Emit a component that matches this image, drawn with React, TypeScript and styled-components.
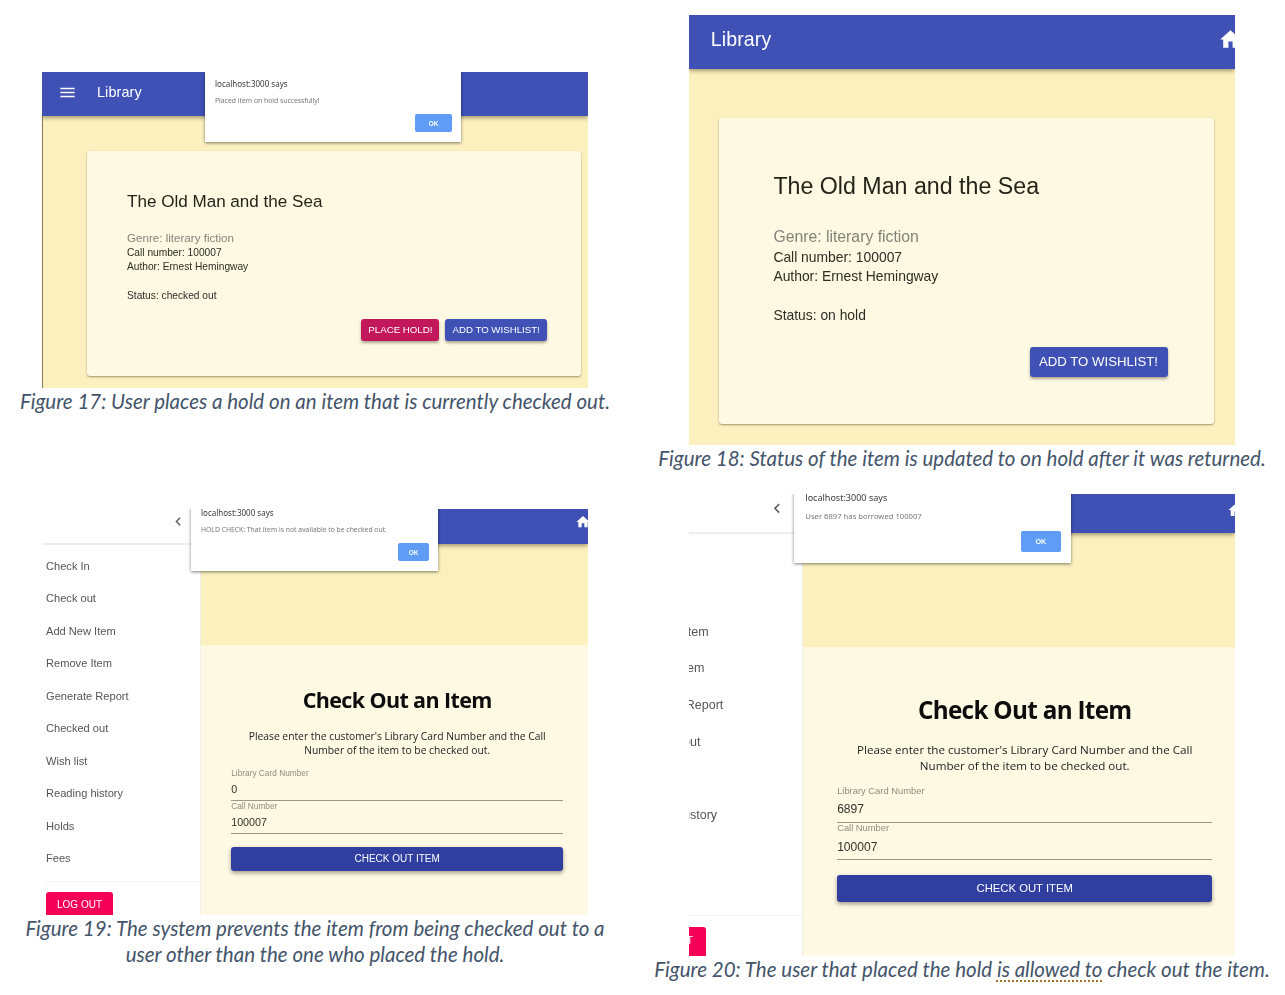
import React from 'react';
import styled, { createGlobalStyle } from 'styled-components';

const GlobalStyle = createGlobalStyle`
  html, body {
    margin: 0;
    background: #ffffff;
    overflow: hidden;
  }
`;

const Page = styled.div`
  display: grid;
  grid-template-columns: 630px 646px;
  grid-template-rows: 480px 515px;
  column-gap: 9px;
  width: 1285px;
  height: 995px;
`;
const Figure = styled.figure<{ $top: number }>`
  display: flex;
  flex-direction: column;
  align-items: center;
  margin: ${(p) => p.$top}px 0 0;
`;
const Caption = styled.figcaption`
  padding-top: 1px;
  font-family: Lato, 'Open Sans', sans-serif;
  font-style: italic;
  font-size: 20.5px;
  line-height: 25.5px;
  color: #44546a;
  text-align: center;
  white-space: nowrap;
`;
const Squiggle = styled.span`
  text-decoration: underline dotted #a5752a 2px;
  text-underline-offset: 3px;
`;
const Shot = styled.div<{ $u: number; $h: number }>`
  --u: ${(p) => p.$u}px;
  position: relative;
  display: flex;
  flex-shrink: 0;
  width: 546px;
  height: ${(p) => p.$h}px;
  overflow: hidden;
  font-family: 'Liberation Sans', Arial, sans-serif;
  background: #fbf0be;
  filter: blur(0.3px);
`;
const Column = styled.div`
  display: flex;
  flex-direction: column;
  flex: 1;
  min-width: 0;
`;
const AppBar = styled.header<{ $height: number; $lift: number }>`
  position: relative;
  z-index: 1;
  display: flex;
  align-items: center;
  flex-shrink: 0;
  box-sizing: border-box;
  height: ${(p) => p.$height}px;
  padding-left: calc(16 * var(--u));
  padding-bottom: ${(p) => p.$lift}px;
  background: #3f51b5;
  box-shadow: 0 2px 4px rgba(60, 50, 20, 0.45);
  color: #ffffff;
`;
const AppTitle = styled.span`
  font-size: calc(14.4 * var(--u));
  letter-spacing: 0.1px;
`;
const MenuGlyph = styled.svg`
  width: 19px;
  height: 19px;
  margin-right: 20px;
  fill: #ffffff;
`;
const HomeGlyph = styled.svg<{ $size: number; $overhang: number }>`
  flex-shrink: 0;
  width: ${(p) => p.$size}px;
  height: ${(p) => p.$size}px;
  margin-left: auto;
  margin-right: -${(p) => p.$overhang}px;
  fill: #ffffff;
`;

const Backdrop = styled.div<{ $edge?: boolean; $left: number; $right: number; $top: number }>`
  flex: 1;
  padding: ${(p) => p.$top}px ${(p) => p.$right}px 0 ${(p) => p.$left}px;
  border-left: ${(p) => (p.$edge ? '1px solid #857a55' : 'none')};
`;
const BookCard = styled.section`
  height: calc(225 * var(--u));
  box-sizing: border-box;
  padding: calc(40.7 * var(--u)) calc(34.2 * var(--u)) 0 calc(40 * var(--u));
  background: #fef9e3;
  border-radius: 3px;
  box-shadow: 0 1px 2px rgba(70, 60, 30, 0.5);
`;
const BookTitle = styled.h2`
  margin: 0 0 calc(19.3 * var(--u));
  font-size: calc(17.07 * var(--u));
  font-weight: 400;
  line-height: calc(20 * var(--u));
  color: #26231a;
`;
const BookLine = styled.div<{ $muted?: boolean; $gap?: number }>`
  margin-top: calc(${(p) => p.$gap ?? 0} * var(--u));
  font-size: calc(${(p) => (p.$muted ? 11.6 : 10.2)} * var(--u));
  line-height: calc(14 * var(--u));
  color: ${(p) => (p.$muted ? '#85827a' : '#2f2c24')};
`;
const CardActions = styled.div`
  display: flex;
  justify-content: flex-end;
  gap: calc(6 * var(--u));
  margin-top: calc(16.5 * var(--u));
`;
const ActionButton = styled.button<{ $pink?: boolean }>`
  height: calc(22 * var(--u));
  padding: 0 calc(7 * var(--u)) calc(1 * var(--u));
  border: 0;
  border-radius: 3px;
  background: ${(p) => (p.$pink ? '#c2185b' : '#3f51b5')};
  box-shadow: 0 2px 3px rgba(50, 40, 20, 0.4);
  color: #ffffff;
  font-family: inherit;
  font-size: calc(9.7 * var(--u));
  white-space: nowrap;
`;

const Sidebar = styled.aside<{ $width: number }>`
  display: flex;
  flex-direction: column;
  flex-shrink: 0;
  box-sizing: border-box;
  width: ${(p) => p.$width}px;
  overflow: hidden;
  background: #ffffff;
  border-right: 1px solid #f0eee8;
`;
const SidebarHead = styled.div`
  display: flex;
  align-items: center;
  justify-content: flex-end;
  flex-shrink: 0;
  box-sizing: border-box;
  height: calc(35.5 * var(--u));
  padding-right: calc(15 * var(--u));
  padding-bottom: calc(9 * var(--u));
  border-bottom: 2px solid #eeeeee;
`;
const ChevronGlyph = styled.svg`
  width: calc(13 * var(--u));
  height: calc(13 * var(--u));
  fill: none;
  stroke: #5c5c5c;
  stroke-width: 2.6;
`;
const NavList = styled.nav<{ $shift: number }>`
  margin-left: ${(p) => p.$shift}px;
  padding-top: calc(5.4 * var(--u));
  padding-bottom: calc(6.3 * var(--u));
  border-bottom: 1px solid #f2f2f2;
`;
const NavItem = styled.div`
  height: calc(32.5 * var(--u));
  font-size: calc(11.1 * var(--u));
  line-height: calc(32.5 * var(--u));
  color: #555555;
  white-space: nowrap;
`;
const LogoutButton = styled.button<{ $shift: number }>`
  flex-shrink: 0;
  width: calc(67 * var(--u));
  height: calc(34 * var(--u));
  margin: calc(10 * var(--u)) 0 0 ${(p) => p.$shift}px;
  padding: 0 0 calc(10 * var(--u));
  border: 0;
  border-radius: 3px;
  background: #f50057;
  color: #ffffff;
  font-family: inherit;
  font-size: calc(10 * var(--u));
`;
const YellowBand = styled.div`
  flex-shrink: 0;
  height: calc(101 * var(--u));
`;
const FormPanel = styled.section`
  flex: 1;
  padding: calc(42 * var(--u)) 0 0 calc(30.2 * var(--u));
  background: #fef9e3;
`;
const FormBody = styled.div`
  width: calc(332 * var(--u));
`;
const FormHeading = styled.h2`
  margin: 0 0 calc(16 * var(--u));
  font-family: 'Open Sans', 'Noto Sans', sans-serif;
  font-size: calc(21.5 * var(--u));
  font-weight: 700;
  letter-spacing: calc(-0.62 * var(--u));
  line-height: calc(26 * var(--u));
  text-align: center;
  color: #0c0c0c;
`;
const FormIntro = styled.p`
  margin: 0 0 calc(10.5 * var(--u));
  font-family: 'Open Sans', 'Noto Sans', sans-serif;
  font-size: calc(10.3 * var(--u));
  line-height: calc(14.3 * var(--u));
  text-align: center;
  color: #222222;
`;
const FieldLabel = styled.div`
  font-size: calc(8.3 * var(--u));
  line-height: calc(10 * var(--u));
  color: #8f8c80;
`;
const FieldValue = styled.div`
  box-sizing: content-box;
  height: calc(14 * var(--u));
  padding: calc(4.4 * var(--u)) 0 calc(3.6 * var(--u));
  border-bottom: 1px solid #9a978b;
  font-size: calc(10.7 * var(--u));
  line-height: calc(14 * var(--u));
  color: #33312a;
`;
const SubmitButton = styled.button`
  display: block;
  width: 100%;
  height: calc(24 * var(--u));
  margin-top: calc(13 * var(--u));
  padding: 0 0 calc(1 * var(--u));
  border: 0;
  border-radius: 3px;
  background: #303f9f;
  box-shadow: 0 2px 4px rgba(50, 40, 20, 0.45);
  color: #ffffff;
  font-family: inherit;
  font-size: calc(10 * var(--u));
`;

const AlertBox = styled.div<{ $left: number; $width: number; $cut: number }>`
  position: absolute;
  z-index: 2;
  top: -${(p) => p.$cut}px;
  left: ${(p) => p.$left}px;
  box-sizing: border-box;
  width: ${(p) => p.$width}px;
  height: calc(69.5 * var(--u));
  padding: calc(7 * var(--u)) calc(9 * var(--u)) 0 calc(10 * var(--u));
  background: #ffffff;
  box-shadow: 0 1px 3px rgba(0, 0, 0, 0.5);
  font-family: 'Noto Sans', 'Open Sans', sans-serif;
`;
const AlertOrigin = styled.div`
  font-size: calc(8 * var(--u));
  line-height: calc(10 * var(--u));
  color: #3a3a3a;
  white-space: nowrap;
`;
const AlertText = styled.div`
  margin-top: calc(6.7 * var(--u));
  font-size: calc(6.8 * var(--u));
  line-height: calc(10 * var(--u));
  color: #777777;
  white-space: nowrap;
`;
const AlertFooter = styled.div`
  display: flex;
  justify-content: flex-end;
  margin-top: calc(8.3 * var(--u));
`;
const AlertOk = styled.button<{ $width: number }>`
  width: ${(p) => p.$width}px;
  height: calc(18.5 * var(--u));
  padding: 0;
  border: 0;
  border-radius: 2px;
  background: #5f9cf5;
  color: #ffffff;
  font-family: 'Liberation Sans', Arial, sans-serif;
  font-size: calc(6.4 * var(--u));
  font-weight: 700;
`;

const MENU_ITEMS = [
  'Check In',
  'Check out',
  'Add New Item',
  'Remove Item',
  'Generate Report',
  'Checked out',
  'Wish list',
  'Reading history',
  'Holds',
  'Fees',
];

function MenuIcon(): JSX.Element {
  return (
    <MenuGlyph viewBox="0 0 24 24">
      <path d="M3 18h18v-2H3v2zm0-5h18v-2H3v2zm0-7v2h18V6H3z" />
    </MenuGlyph>
  );
}

function HomeIcon({ size, overhang }: { size: number; overhang: number }): JSX.Element {
  return (
    <HomeGlyph viewBox="0 0 24 24" $size={size} $overhang={overhang}>
      <path d="M10 20v-6h4v6h5v-8h3L12 3 2 12h3v8z" />
    </HomeGlyph>
  );
}

interface AlertProps {
  text: string;
  left: number;
  width: number;
  cut: number;
  okWidth: number;
}

function Alert({ text, left, width, cut, okWidth }: AlertProps): JSX.Element {
  return (
    <AlertBox $left={left} $width={width} $cut={cut}>
      <AlertOrigin>localhost:3000 says</AlertOrigin>
      <AlertText>{text}</AlertText>
      <AlertFooter>
        <AlertOk $width={okWidth}>OK</AlertOk>
      </AlertFooter>
    </AlertBox>
  );
}

function BookDetail({ status, canHold }: { status: string; canHold?: boolean }): JSX.Element {
  return (
    <BookCard>
      <BookTitle>The Old Man and the Sea</BookTitle>
      <BookLine $muted>Genre: literary fiction</BookLine>
      <BookLine $gap={1.5}>Call number: 100007</BookLine>
      <BookLine>Author: Ernest Hemingway</BookLine>
      <BookLine $gap={14.5}>Status: {status}</BookLine>
      <CardActions>
        {canHold && <ActionButton $pink>PLACE HOLD!</ActionButton>}
        <ActionButton>ADD TO WISHLIST!</ActionButton>
      </CardActions>
    </BookCard>
  );
}

function SideMenu({ width, shift }: { width: number; shift: number }): JSX.Element {
  return (
    <Sidebar $width={width}>
      <SidebarHead>
        <ChevronGlyph viewBox="0 0 24 24">
          <path d="M15 5l-7 7 7 7" />
        </ChevronGlyph>
      </SidebarHead>
      <NavList $shift={shift}>
        {MENU_ITEMS.map((item) => (
          <NavItem key={item}>{item}</NavItem>
        ))}
      </NavList>
      <LogoutButton $shift={shift}>LOG OUT</LogoutButton>
    </Sidebar>
  );
}

function CheckoutForm({ card }: { card: string }): JSX.Element {
  return (
    <FormPanel>
      <FormBody>
        <FormHeading>Check Out an Item</FormHeading>
        <FormIntro>
          Please enter the customer's Library Card Number and the Call
          <br />
          Number of the item to be checked out.
        </FormIntro>
        <FieldLabel>Library Card Number</FieldLabel>
        <FieldValue>{card}</FieldValue>
        <FieldLabel>Call Number</FieldLabel>
        <FieldValue>100007</FieldValue>
        <SubmitButton>CHECK OUT ITEM</SubmitButton>
      </FormBody>
    </FormPanel>
  );
}

function App(): JSX.Element {
  return (
    <Page>
      <GlobalStyle />
      <Figure $top={72}>
        <Shot $u={1} $h={316}>
          <Column>
            <AppBar $height={44} $lift={4}>
              <MenuIcon />
              <AppTitle>Library</AppTitle>
            </AppBar>
            <Backdrop $edge $left={44} $right={7} $top={35}>
              <BookDetail status="checked out" canHold />
            </Backdrop>
          </Column>
          <Alert text="Placed item on hold successfully!" left={163} width={256} cut={0} okWidth={37} />
        </Shot>
        <Caption>Figure 17: User places a hold on an item that is currently checked out.</Caption>
      </Figure>

      <Figure $top={15}>
        <Shot $u={1.36} $h={430}>
          <Column>
            <AppBar $height={54} $lift={6}>
              <AppTitle>Library</AppTitle>
              <HomeIcon size={25} overhang={8} />
            </AppBar>
            <Backdrop $left={30} $right={21} $top={49}>
              <BookDetail status="on hold" />
            </Backdrop>
          </Column>
        </Shot>
        <Caption>Figure 18: Status of the item is updated to on hold after it was returned.</Caption>
      </Figure>

      <Figure $top={29}>
        <Shot $u={1} $h={406}>
          <SideMenu width={159} shift={4} />
          <Column>
            <AppBar $height={35} $lift={10}>
              <HomeIcon size={16} overhang={3} />
            </AppBar>
            <YellowBand />
            <CheckoutForm card="0" />
          </Column>
          <Alert
            text="HOLD CHECK: That item is not available to be checked out."
            left={149}
            width={247}
            cut={8}
            okWidth={31}
          />
        </Shot>
        <Caption>
          Figure 19: The system prevents the item from being checked out to a
          <br />
          user other than the one who placed the hold.
        </Caption>
      </Figure>

      <Figure $top={14}>
        <Shot $u={1.13} $h={462}>
          <SideMenu width={114} shift={-59} />
          <Column>
            <AppBar $height={39} $lift={8}>
              <HomeIcon size={18} overhang={10} />
            </AppBar>
            <YellowBand />
            <CheckoutForm card="6897" />
          </Column>
          <Alert text="User 6897 has borrowed 100007" left={105} width={277} cut={10} okWidth={40} />
        </Shot>
        <Caption>
          Figure 20: The user that placed the hold <Squiggle>is allowed to</Squiggle> check out the item.
        </Caption>
      </Figure>
    </Page>
  );
}

export default App;
